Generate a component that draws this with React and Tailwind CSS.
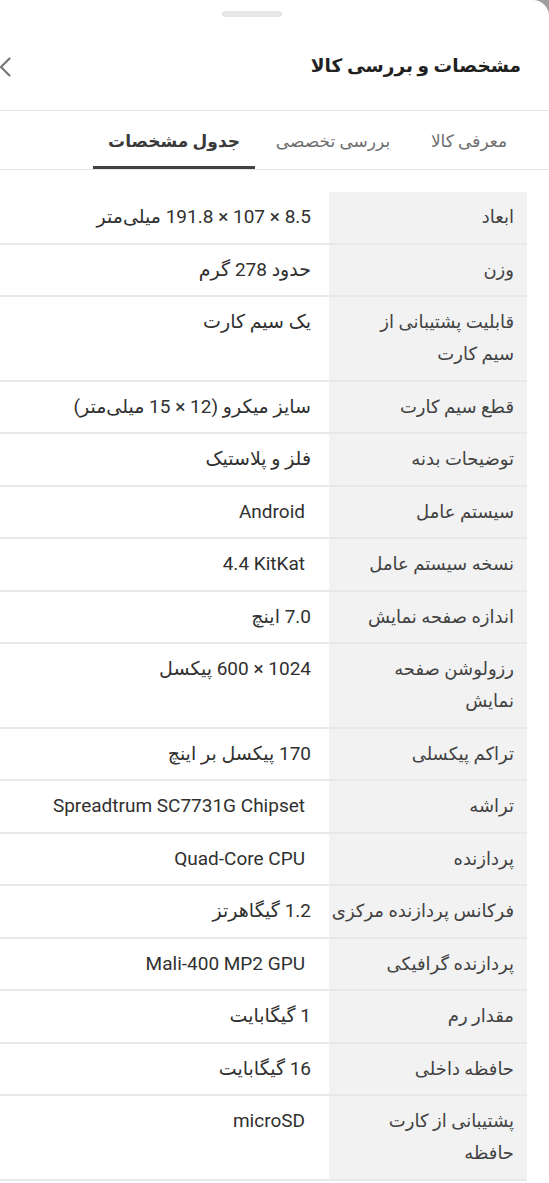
import React from "react";

// \n marks where the label breaks in the reference
const specs = [
  { k: "ابعاد", v: "8.5 × 107 × 191.8 میلی‌متر" },
  { k: "وزن", v: "حدود 278 گرم" },
  { k: "قابلیت پشتیبانی از\nسیم کارت", v: "یک سیم کارت" },
  { k: "قطع سیم کارت", v: "سایز میکرو (12 × 15 میلی‌متر)" },
  { k: "توضیحات بدنه", v: "فلز و پلاستیک" },
  { k: "سیستم عامل", v: "Android", latin: true },
  { k: "نسخه سیستم عامل", v: "4.4 KitKat", latin: true },
  { k: "اندازه صفحه نمایش", v: "7.0 اینچ" },
  { k: "رزولوشن صفحه\nنمایش", v: "1024 × 600 پیکسل" },
  { k: "تراکم پیکسلی", v: "170 پیکسل بر اینچ" },
  { k: "تراشه", v: "Spreadtrum SC7731G Chipset", latin: true },
  { k: "پردازنده", v: "Quad-Core CPU", latin: true },
  { k: "فرکانس پردازنده مرکزی", v: "1.2 گیگاهرتز" },
  { k: "پردازنده گرافیکی", v: "Mali-400 MP2 GPU", latin: true },
  { k: "مقدار رم", v: "1 گیگابایت" },
  { k: "حافظه داخلی", v: "16 گیگابایت" },
  { k: "پشتیبانی از کارت\nحافظه", v: "microSD", latin: true },
];

const tabs = [
  { label: "معرفی کالا", w: "w-[116px]" },
  { label: "بررسی تخصصی", w: "w-[156px]" },
  { label: "جدول مشخصات", w: "w-[162px]", active: true },
];

const SpecRow = ({ k, v, latin }) => (
  <div className="flex border-b-2 border-[#e8e8e8]">
    <div className="w-[198px] shrink-0 whitespace-pre bg-[#f2f2f2] py-[9.25px] pr-[13px] text-[18px] leading-[32px] text-[#424242]">
      {k}
    </div>
    <div
      className={`flex-1 py-[9.25px] pl-3 text-[19px] leading-[32px] text-[#303030] ${
        latin ? "pr-[24px]" : "pr-[18px]"
      }`}
    >
      {latin ? <span dir="ltr">{v}</span> : v}
    </div>
  </div>
);

export default function App() {
  return (
    <div
      dir="rtl"
      className="min-h-screen overflow-hidden bg-[#9e9e9e] font-['Roboto','DejaVu_Sans',sans-serif]"
    >
      <div className="min-h-screen rounded-tr-[16px] bg-white pb-4">
        {/* handle */}
        <div className="flex justify-center pt-[11px] pr-[46px]">
          <div className="h-[6px] w-[60px] rounded-full bg-[#e6e6e6]" />
        </div>

        {/* header */}
        <div className="flex h-[93px] items-center justify-between pr-[28px] pt-[7px]">
          <h1 className="text-[18.5px] font-bold text-[#212121]">
            مشخصات و بررسی کالا
          </h1>
          <svg width="12" height="20" viewBox="0 0 12 20">
            <path
              d="M9.5 1.5 L1 10 L9.5 18.5"
              fill="none"
              stroke="#777"
              strokeWidth="2.2"
              strokeLinecap="round"
              strokeLinejoin="round"
            />
          </svg>
        </div>

        {/* tabs */}
        <div className="flex h-[60px] border-y border-[#e4e4e4] pr-[22px]">
          {tabs.map((t) => (
            <div
              key={t.label}
              className={`${t.w} flex items-center justify-center text-[17px] ${
                t.active
                  ? "border-b-[3px] border-[#424242] pt-[7px] font-bold text-[#3a3a3a]"
                  : "pt-[4px] text-[#6e6e6e]"
              }`}
            >
              {t.label}
            </div>
          ))}
        </div>

        {/* spec table */}
        <div className="mt-[22px] mr-[22px]">
          {specs.map((s) => (
            <SpecRow key={s.k} {...s} />
          ))}
        </div>
      </div>
    </div>
  );
}
